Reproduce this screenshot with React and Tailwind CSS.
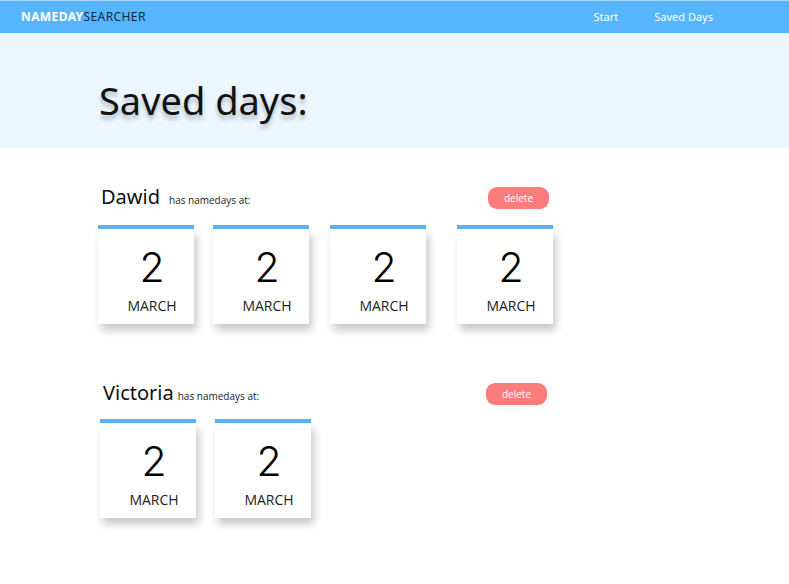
const days = [
  {
    name: "Dawid",
    nameGap: "ml-[9px]",
    rowTop: "mt-[37px]",
    namePad: "pl-[101px]",
    cards: [
      { day: 2, month: "MARCH", ml: "ml-0" },
      { day: 2, month: "MARCH", ml: "ml-[19px]" },
      { day: 2, month: "MARCH", ml: "ml-[21px]" },
      { day: 2, month: "MARCH", ml: "ml-[31px]" },
    ],
    pad: "pl-[98px]",
    delPad: "pl-[488px]",
    gapTop: "mt-[16px]",
  },
  {
    name: "Victoria",
    nameGap: "ml-1",
    rowTop: "mt-[57px]",
    namePad: "pl-[103px]",
    cards: [
      { day: 2, month: "MARCH", ml: "ml-0" },
      { day: 2, month: "MARCH", ml: "ml-[19px]" },
    ],
    pad: "pl-[100px]",
    delPad: "pl-[486px]",
    gapTop: "mt-[14px]",
  },
];

function DayCard({ day, month, ml }) {
  return (
    <div className={`${ml} w-[96px] flex flex-col`}>
      <div className="h-[4px] bg-[#5bb2ef]" />
      <div className="h-[95px] pl-[12px] bg-white shadow-[3px_6px_8px_rgba(0,0,0,0.22)] flex flex-col items-center">
        <div className="mt-[18px] text-[41px] leading-[40px] font-light text-black font-['Inter',sans-serif]">
          {day}
        </div>
        <div className="mt-[11px] text-[14px] leading-[16px] text-[#222] font-['Open_Sans',sans-serif]">
          {month}
        </div>
      </div>
    </div>
  );
}

export default function App() {
  return (
    <div className="w-[789px] h-[584px] bg-white font-['Open_Sans',sans-serif] overflow-hidden">
      {/* navbar */}
      <div className="h-[33px] bg-[#56b5fd] border-t border-[#a8d8ff] flex items-center px-[21px]">
        <div className="text-[12px] tracking-[0.4px] font-['Noto_Sans',sans-serif]">
          <span className="font-bold text-white">NAMEDAY</span>
          <span className="text-[#0d2a4a]">SEARCHER</span>
        </div>
        <div className="ml-auto mr-[55px] flex gap-[36px] text-[11px] text-white font-['Noto_Sans',sans-serif]">
          <span>Start</span>
          <span>Saved Days</span>
        </div>
      </div>

      {/* hero */}
      <div className="h-[115px] bg-[#ebf6fe] pl-[99px] pt-[45px]">
        <h1 className="text-[38px] leading-[44px] text-[#111] font-['Noto_Sans',sans-serif] [text-shadow:0_4px_4px_rgba(0,0,0,0.25)]">
          Saved days:
        </h1>
      </div>

      {/* saved entries */}
      {days.map((d) => (
        <div key={d.name} className={d.rowTop}>
          <div className="relative h-[24px]">
            <div className={`${d.namePad} flex items-baseline`}>
              <span className="text-[20px] leading-[24px] text-[#111] font-['Noto_Sans',sans-serif]">{d.name}</span>
              <span className={`${d.nameGap} text-[10px] text-[#222]`}>has namedays at:</span>
            </div>
            <div className={`absolute top-[-1px] left-0 ${d.delPad}`}>
              <button className="w-[61px] h-[22px] rounded-[9px] bg-[#fc7b7b] text-white text-[10px] leading-[22px]">
                delete
              </button>
            </div>
          </div>
          <div className={`${d.pad} ${d.gapTop} flex`}>
            {d.cards.map((c, i) => (
              <DayCard key={i} {...c} />
            ))}
          </div>
        </div>
      ))}
    </div>
  );
}
